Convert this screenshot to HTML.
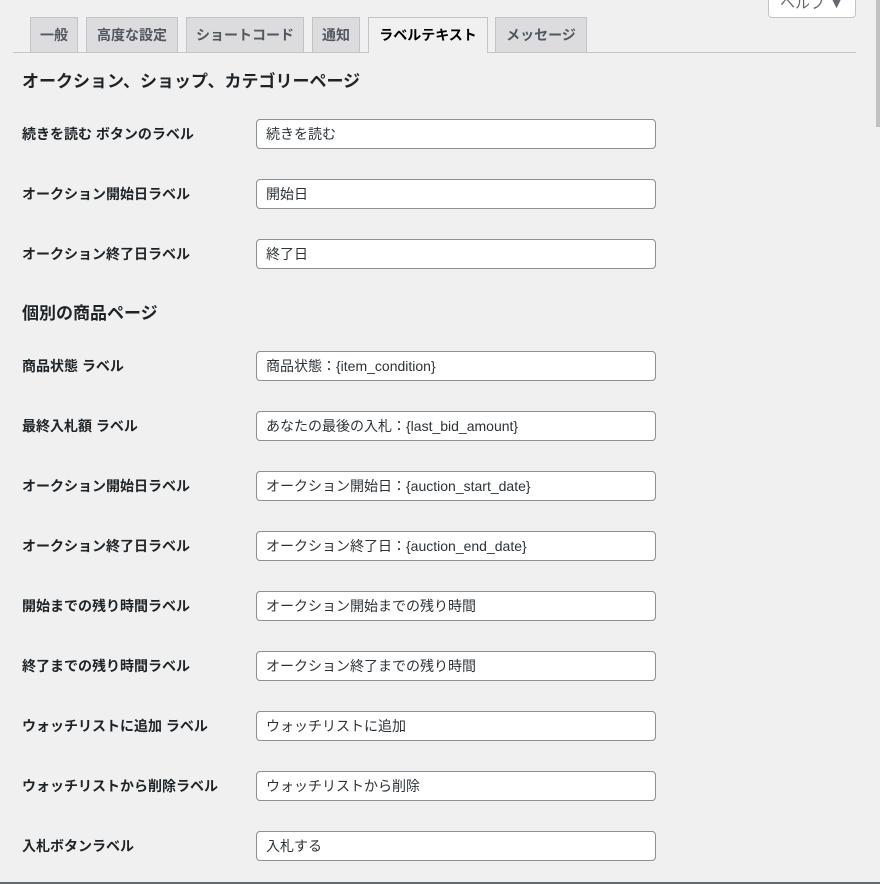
<!DOCTYPE html>
<html><head><meta charset="utf-8"><style>
body{margin:0;width:880px;height:884px;background:#f0f0f1;font-family:"Liberation Sans","Noto Sans CJK JP",sans-serif;color:#1d2327;position:relative;overflow:hidden}
.help{position:absolute;left:768px;top:-10px;width:86px;height:26px;background:#fff;border:1px solid #c3c4c7;border-radius:0 0 4px 4px;font-size:15px;color:#646970;text-align:center;line-height:26px}
.tabs{position:absolute;left:13px;top:17px;width:843px;height:35px;border-bottom:1px solid #c3c4c7}
.tab{position:absolute;top:0;height:35px;background:#dcdcde;border:1px solid #c3c4c7;border-bottom:none;box-sizing:border-box;font-size:14px;font-weight:600;color:#50575e;text-align:center;line-height:34px;white-space:nowrap;overflow:hidden}
.tab.a{background:#f0f0f1;color:#000;height:36px}
h2{position:absolute;left:22px;margin:0;font-size:17px;font-weight:bold;color:#1d2327;white-space:nowrap}
.lab{position:absolute;left:22px;font-size:14px;font-weight:bold;color:#1d2327}
.in{position:absolute;left:256px;height:28px;background:#fff;border:1px solid #8c8f94;border-radius:4px;font-size:14px;color:#2c3338;line-height:28px;padding-left:9px;width:389px}
.sb{position:absolute;right:0;top:0;width:4px;height:127px;background:#c1c1c1}
.bot{position:absolute;left:0;top:882px;width:880px;height:2px;background:#646970}
</style></head><body>
<div class="help">ヘルプ ▼</div>
<div class="sb"></div>
<div class="tabs">
<div class="tab" style="left:17px;width:48px">一般</div>
<div class="tab" style="left:73px;width:92px">高度な設定</div>
<div class="tab" style="left:173px;width:118px">ショートコード</div>
<div class="tab" style="left:299px;width:48px">通知</div>
<div class="tab a" style="left:355px;width:120px">ラベルテキスト</div>
<div class="tab" style="left:482px;width:92px">メッセージ</div>
</div>
<h2 style="top:67px">オークション、ショップ、カテゴリーページ</h2>
<div class="lab" style="top:124px">続きを読む ボタンのラベル</div><div class="in" style="top:119px">続きを読む</div>
<div class="lab" style="top:184px">オークション開始日ラベル</div><div class="in" style="top:179px">開始日</div>
<div class="lab" style="top:244px">オークション終了日ラベル</div><div class="in" style="top:239px">終了日</div>
<h2 style="top:299px">個別の商品ページ</h2>
<div class="lab" style="top:356px">商品状態 ラベル</div><div class="in" style="top:351px">商品状態：{item_condition}</div>
<div class="lab" style="top:416px">最終入札額 ラベル</div><div class="in" style="top:411px">あなたの最後の入札：{last_bid_amount}</div>
<div class="lab" style="top:476px">オークション開始日ラベル</div><div class="in" style="top:471px">オークション開始日：{auction_start_date}</div>
<div class="lab" style="top:536px">オークション終了日ラベル</div><div class="in" style="top:531px">オークション終了日：{auction_end_date}</div>
<div class="lab" style="top:596px">開始までの残り時間ラベル</div><div class="in" style="top:591px">オークション開始までの残り時間</div>
<div class="lab" style="top:656px">終了までの残り時間ラベル</div><div class="in" style="top:651px">オークション終了までの残り時間</div>
<div class="lab" style="top:716px">ウォッチリストに追加 ラベル</div><div class="in" style="top:711px">ウォッチリストに追加</div>
<div class="lab" style="top:776px">ウォッチリストから削除ラベル</div><div class="in" style="top:771px">ウォッチリストから削除</div>
<div class="lab" style="top:836px">入札ボタンラベル</div><div class="in" style="top:831px">入札する</div>
<div class="bot"></div>
</body></html>
